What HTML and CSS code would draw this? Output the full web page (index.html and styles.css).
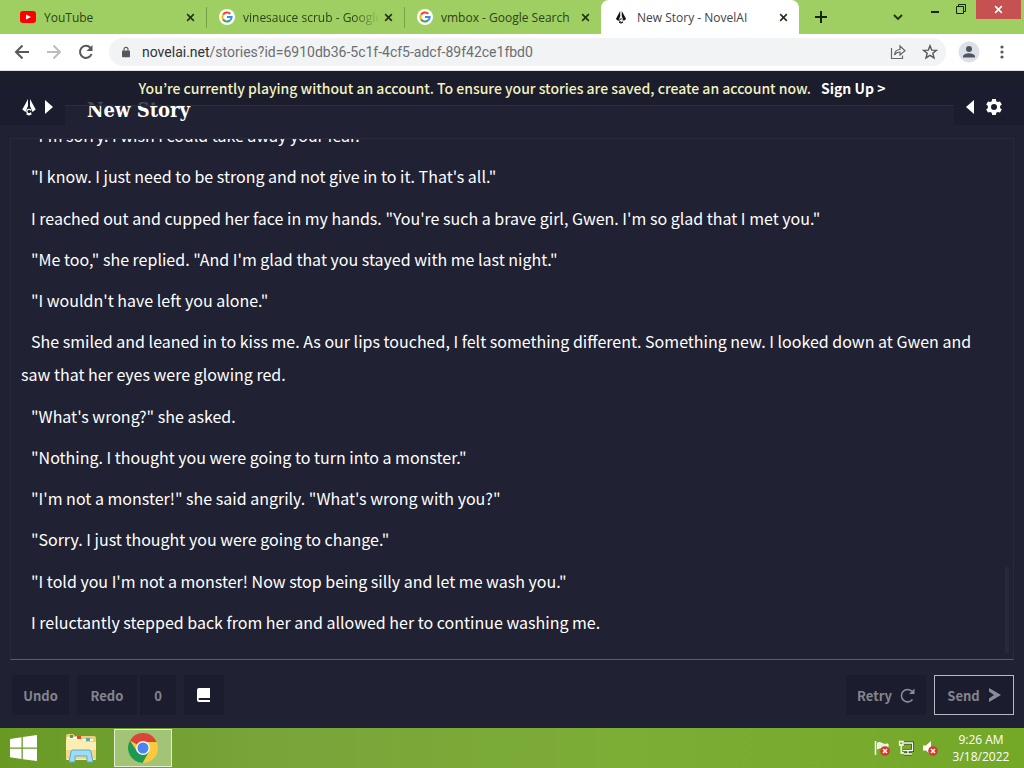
FILE: index.html
```html
<!DOCTYPE html>
<html lang="en">
<head>
    <meta charset="UTF-8">
    <meta name="viewport" content="width=device-width, initial-scale=1.0">
    <title>New Story - NovelAI</title>
    <link rel="stylesheet" href="styles.css">
</head>
<body>
    <svg class="defs" width="0" height="0" aria-hidden="true">
        <symbol id="google" viewBox="0 0 16 16">
            <circle cx="8" cy="8" r="8" fill="#fff"/>
            <g fill="none" stroke-width="2">
                <path d="M4.1 5.6A4.6 4.6 0 0 1 11.3 4.8" stroke="#ea4335"/>
                <path d="M4.1 10.4A4.6 4.6 0 0 1 4.1 5.6" stroke="#fbbc05"/>
                <path d="M11.2 11.3A4.6 4.6 0 0 1 4.1 10.4" stroke="#34a853"/>
                <path d="M8 8H12.6A4.6 4.6 0 0 1 11.2 11.3" stroke="#4285f4"/>
            </g>
        </symbol>
        <symbol id="close" viewBox="0 0 10 10">
            <path d="M1.3 1.3L8.7 8.7M8.7 1.3L1.3 8.7" fill="none" stroke="currentColor" stroke-width="1.8"/>
        </symbol>
        <symbol id="nib" viewBox="0 0 14 17">
            <path d="M6 0V7L3.5 13L.3 10.500L3.300 5ZM8 0V7L10.500 13L13.700 10.500L10.700 5Z" fill="currentColor"/>
            <path d="M4.500 14.800Q7 16.800 9.500 14.800M9 11.500A2.200 2.200 0 1 0 9 13.500" fill="none" stroke="currentColor" stroke-width="1.300"/>
        </symbol>
    </svg>

    <div class="tabs">
        <div class="tab">
            <svg class="favicon" viewBox="0 0 16 16"><rect y="2" width="16" height="12" rx="3" fill="#f00"/><path d="M6 5.4L11 8L6 10.6Z" fill="#fff"/></svg>
            <span class="tab-name">YouTube</span>
            <button class="tab-close" aria-label="Close tab"><svg><use href="#close"/></svg></button>
        </div>
        <div class="tab">
            <svg class="favicon"><use href="#google"/></svg>
            <span class="tab-name fade">vinesauce scrub - Google</span>
            <button class="tab-close" aria-label="Close tab"><svg><use href="#close"/></svg></button>
        </div>
        <div class="tab">
            <svg class="favicon"><use href="#google"/></svg>
            <span class="tab-name">vmbox - Google Search</span>
            <button class="tab-close" aria-label="Close tab"><svg><use href="#close"/></svg></button>
        </div>
        <div class="tab active">
            <svg class="favicon nib-small"><use href="#nib"/></svg>
            <span class="tab-name">New Story - NovelAI</span>
            <button class="tab-close" aria-label="Close tab"><svg><use href="#close"/></svg></button>
        </div>
        <button class="new-tab" aria-label="New tab"><svg width="12" height="12" viewBox="0 0 12 12"><path d="M6 0V12M0 6H12" stroke="#17250a" stroke-width="2"/></svg></button>
        <div class="window-buttons">
            <button class="chevron" aria-label="Search tabs"><svg width="10" height="7" viewBox="0 0 10 7"><path d="M1 1L5 5L9 1" fill="none" stroke="#1f3010" stroke-width="1.8"/></svg></button>
            <button class="minimize" aria-label="Minimize"><svg width="8" height="10" viewBox="0 0 8 10"><path d="M0 8H8" stroke="#17250a" stroke-width="2"/></svg></button>
            <button class="restore" aria-label="Restore"><svg width="10" height="10" viewBox="0 0 10 10"><path d="M.5 2.5H7.5V9.5H.5ZM2.5 2.5V.5H9.5V7.5H7.5" fill="none" stroke="#17250a"/></svg></button>
            <button class="exit" aria-label="Close"><svg width="9" height="9" viewBox="0 0 10 10"><use href="#close"/></svg></button>
        </div>
    </div>

    <div class="toolbar">
        <button aria-label="Back"><svg width="16" height="16" viewBox="0 0 16 16"><path d="M15 8H2M8.5 1.5L2 8L8.5 14.5" fill="none" stroke="#55585c" stroke-width="2"/></svg></button>
        <button aria-label="Forward"><svg width="16" height="16" viewBox="0 0 16 16"><path d="M1 8H14M7.5 1.5L14 8L7.5 14.5" fill="none" stroke="#bbbdc0" stroke-width="2"/></svg></button>
        <button aria-label="Reload"><svg width="16" height="16" viewBox="0 0 16 16"><path d="M13.6 10A6 6 0 1 1 12.4 3.8" fill="none" stroke="#55585c" stroke-width="2"/><path d="M14.5 1V7H8.5Z" fill="#55585c"/></svg></button>
        <div class="address">
            <svg width="8" height="12" viewBox="0 0 10 13"><rect y="4.5" width="10" height="8.5" rx="1" fill="#54575b"/><path d="M2.5 5V3.2a2.5 2.5 0 0 1 5 0V5" fill="none" stroke="#54575b" stroke-width="1.4"/></svg>
            <span class="url"><b>novelai.net</b>/stories?id=6910db36-5c1f-4cf5-adcf-89f42ce1fbd0</span>
            <button aria-label="Share"><svg width="16" height="16" viewBox="0 0 16 16"><path d="M1.5 4V14.5H12.5V11.5M4.5 11Q5 5.5 10 5.5V2L15 6.8L10 11V8Q6.500 8 4.5 11Z" fill="none" stroke="#63666a" stroke-width="1.2"/></svg></button>
            <button aria-label="Bookmark"><svg width="16" height="16" viewBox="0 0 16 16"><path d="M8 1.800L9.700 6.100L14.400 6.400L10.800 9.300L12 13.900L8 11.400L4 13.900L5.200 9.300L1.600 6.400L6.300 6.100Z" fill="none" stroke="#55585c" stroke-width="1.4"/></svg></button>
        </div>
        <button class="profile" aria-label="Profile"><svg width="22" height="22" viewBox="0 0 22 22"><circle cx="11" cy="11" r="10.500" fill="#dce0e8"/><circle cx="11" cy="8" r="3" fill="#50565f"/><path d="M5 16.500V14.800Q6.500 12.300 11 12.300T17 14.800V16.500Z" fill="#50565f"/></svg></button>
        <button aria-label="Menu"><svg width="4" height="14" viewBox="0 0 4 14" fill="#55585c"><circle cx="2" cy="2" r="1.600"/><circle cx="2" cy="7" r="1.600"/><circle cx="2" cy="12" r="1.600"/></svg></button>
    </div>

    <main class="app">
        <div class="banner">
            <span>You’re currently playing without an account. To ensure your stories are saved, create an account now.</span>
            <a href="#signup">Sign Up &gt;</a>
        </div>
        <header class="app-header">
            <button class="corner left" aria-label="Open library">
                <svg width="14" height="17"><use href="#nib"/></svg>
                <svg width="8" height="14" viewBox="0 0 8 14"><path d="M0 0L8 7L0 14Z" fill="#fff"/></svg>
            </button>
            <h1>New Story</h1>
            <button class="corner right" aria-label="Open settings">
                <svg width="8" height="14" viewBox="0 0 8 14"><path d="M8 0L0 7L8 14Z" fill="#fff"/></svg>
                <svg width="16" height="16" viewBox="0 0 16 16"><path fill="#fff" fill-rule="evenodd" d="M6.200 0H9.800L10.300 2.300L11.800 3.100L14 2.400L15.800 5.500L14.100 7.100V8.900L15.800 10.500L14 13.600L11.800 12.900L10.300 13.700L9.800 16H6.200L5.700 13.700L4.200 12.900L2 13.600L.2 10.500L1.900 8.900V7.100L.2 5.500L2 2.400L4.200 3.100L5.700 2.300ZM8 5a3 3 0 1 0 0 6a3 3 0 1 0 0-6Z"/></svg>
            </button>
        </header>

        <div class="editor">
            <article class="story">
                <p class="first">"I'm sorry. I wish I could take away your fear."</p>
                <p>"I know. I just need to be strong and not give in to it. That's all."</p>
                <p>I reached out and cupped her face in my hands. "You're such a brave girl, Gwen. I'm so glad that I met you."</p>
                <p>"Me too," she replied. "And I'm glad that you stayed with me last night."</p>
                <p>"I wouldn't have left you alone."</p>
                <p>She smiled and leaned in to kiss me. As our lips touched, I felt something different. Something new. I looked down at Gwen and saw that her eyes were glowing red.</p>
                <p>"What's wrong?" she asked.</p>
                <p>"Nothing. I thought you were going to turn into a monster."</p>
                <p>"I'm not a monster!" she said angrily. "What's wrong with you?"</p>
                <p>"Sorry. I just thought you were going to change."</p>
                <p>"I told you I'm not a monster! Now stop being silly and let me wash you."</p>
                <p>I reluctantly stepped back from her and allowed her to continue washing me.</p>
            </article>
            <div class="scroll-thumb"></div>
        </div>

        <div class="controls">
            <button class="undo">Undo</button>
            <div class="redo-group">
                <button class="redo">Redo</button>
                <button class="count">0</button>
            </div>
            <button class="book" aria-label="Lorebook"><svg width="14" height="14" viewBox="0 0 14 14"><path d="M2 0H13V10H2.500Q1.500 10 1.500 11T2.500 12H13V14H2Q0 14 0 12V2Q0 0 2 0Z" fill="#fff"/></svg></button>
            <button class="retry">Retry <svg width="15" height="15" viewBox="0 0 15 15"><path d="M12.500 11.500A6.200 6.200 0 1 1 12 3.300" fill="none" stroke="#8c8c99" stroke-width="1.600"/><path d="M14.500 .5V6H9Z" fill="#8c8c99"/></svg></button>
            <button class="send">Send <svg width="12" height="14" viewBox="0 0 12 14"><path d="M0 0L12 7L0 14V10.500L5 7L0 3.500Z" fill="#8c8c99"/></svg></button>
        </div>
    </main>

    <footer class="taskbar">
        <button class="start" aria-label="Start"><svg width="28" height="26" viewBox="0 0 28 26" fill="#fff"><path d="M0 4L11.500 2.200V12.500H0ZM12.800 2L27 0V12.500H12.800ZM0 13.800H11.500V24L0 22.200ZM12.800 13.800H27V26L12.800 24.200Z"/></svg></button>
        <button class="explorer" aria-label="File Explorer">
            <svg width="34" height="30" viewBox="0 0 34 30">
                <path d="M2 3Q2 1 4 1H9L11 3H30Q32 3 32 5V26H2Z" fill="#e9cf77"/>
                <path d="M3 6V4H15V6ZM17 8V6H29V8Z" fill="#fffdf0"/>
                <path d="M13 3h4v3h-4z" fill="#d44b3c"/><path d="M6 2h3v3H6z" fill="#4e9a55"/><path d="M22 5h4v3h-4z" fill="#55a5bd"/>
                <path d="M3 6H19L21 9H32V26Q32 27 31 27H3Q2 27 2 26V7Z" fill="#fbeeb0"/>
                <path d="M2 17H32V26H2Z" fill="#f0d98a"/>
                <path d="M5 29L7 19Q7 17 9 17H25Q27 17 27 19L29 29H23V23H11V29Z" fill="#9ddcf5" stroke="#5aa9ce"/>
            </svg>
        </button>
        <button class="chrome" aria-label="Google Chrome">
            <svg width="30" height="30" viewBox="0 0 30 30">
                <circle cx="15" cy="15" r="15" fill="#fbc93d"/>
                <path d="M15 15L2 7.500A15 15 0 0 1 28 7.500L28.500 9H15Z" fill="#db4437"/>
                <path d="M2 7.500A15 15 0 0 0 14.500 30L21 18.500L15 15L9 18.500Z" fill="#1a9a55"/>
                <circle cx="15" cy="15" r="7" fill="#f4f6f8"/><circle cx="15" cy="15" r="5.500" fill="#4a86ee"/>
            </svg>
        </button>
        <div class="tray">
            <svg width="16" height="16" viewBox="0 0 16 16"><path d="M1.500 1V15" stroke="#fff" stroke-width="1.500"/><path d="M3.500 3Q6 2 8 3.500T14 4V8Q10 9 8 8T3.500 9Z" fill="#e8f0da" stroke="#fff"/><circle cx="11" cy="11" r="4.800" fill="#d53a2d"/><path d="M9 9L13 13M13 9L9 13" stroke="#fff" stroke-width="1.500"/></svg>
            <svg width="16" height="16" viewBox="0 0 16 16"><g fill="none" stroke="#2f4d10" stroke-width="3"><path d="M6 3H14.500V10.500H5M10 11V13.500M6 14H14"/></g><g fill="none" stroke="#fff" stroke-width="1.300"><path d="M6 3H14.500V10.500H5M10 11V13.500M6 14H14M1.500 1.500H5V5H1.500ZM3.200 5V13H6"/></g></svg>
            <svg width="16" height="16" viewBox="0 0 16 16"><path d="M1 5.500H4L9 1V15L4 10.500H1Z" fill="#fff"/><circle cx="11" cy="11" r="4.800" fill="#d53a2d"/><path d="M9 9L13 13M13 9L9 13" stroke="#fff" stroke-width="1.500"/></svg>
        </div>
        <div class="clock">
            <span>9:26 AM</span>
            <span>3/18/2022</span>
        </div>
    </footer>
</body>
</html>
```
FILE: styles.css
```css
*
{
    box-sizing: border-box;
}
body
{
    display: flex;
    flex-direction: column;
    height: 100vh;
    margin: 0;
    overflow: hidden;
    font-family: 'Open Sans', 'Noto Sans', sans-serif;
    font-size: 12px;
}
button
{
    display: flex;
    align-items: center;
    justify-content: center;
    padding: 0;
    border: 0;
    background: none;
    color: inherit;
    font: inherit;
}
svg
{
    flex-shrink: 0;
}
.defs
{
    position: absolute;
}

/* browser tabs */
.tabs
{
    display: flex;
    height: 34px;
    flex-shrink: 0;
    background: #9fce62;
    color: #2d4318;
}
.tab
{
    display: flex;
    align-items: center;
    flex: 0 1 198px;
    min-width: 0;
    gap: 8px;
    padding: 0 10px 0 12px;
}
.tab:first-child
{
    flex-basis: 206px;
    padding-left: 20px;
}
.tab:nth-child(2), .tab:nth-child(3)
{
    border-left: 1px solid;
    border-image: linear-gradient(transparent 8px, #78a044 8px, #78a044 27px, transparent 27px) 1;
}
.tab:nth-child(3)
{
    flex-basis: 197px;
}
.tab.active
{
    background: #fff;
    border-radius: 8px 8px 0 0;
    color: #414347;
}
.favicon
{
    width: 16px;
    height: 16px;
}
.nib-small
{
    color: #111;
    height: 13px;
}
.tab-name
{
    flex: 1;
    overflow: hidden;
    margin-right: -6px;
    white-space: nowrap;
}
.fade
{
    mask-image: linear-gradient(to right, #000 80%, transparent);
}
.tab-close
{
    width: 12px;
    height: 12px;
    color: #24321a;
}
.tab-close svg
{
    width: 9px;
    height: 9px;
}
.new-tab
{
    width: 44px;
}
.window-buttons
{
    display: flex;
    align-items: flex-start;
    margin-left: auto;
    padding-right: 3px;
}
.chevron
{
    width: 28px;
    height: 34px;
    margin-right: 10px;
}
.minimize
{
    width: 26px;
    height: 18px;
}
.restore
{
    width: 26px;
    height: 18px;
    margin-right: 2px;
}
.exit
{
    width: 45px;
    height: 19px;
    background: #c75050;
    color: #fff;
}

/* address row */
.toolbar
{
    display: flex;
    align-items: center;
    gap: 16px;
    height: 37px;
    flex-shrink: 0;
    padding: 0 20px 0 14px;
    background: #fff;
    border-bottom: 1px solid #dde3e0;
}
.toolbar .profile
{
    margin-right: 4px;
}
.address
{
    display: flex;
    align-items: center;
    flex: 1;
    gap: 16px;
    height: 28px;
    margin: 0 -4px 0 -1px;
    padding: 0 8px 0 13px;
    border-radius: 14px;
    background: #f1f3f4;
}
.url
{
    flex: 1;
    margin-left: -4px;
    color: #6b6e73;
    font-family: Roboto, sans-serif;
    font-size: 14px;
    white-space: nowrap;
}
.url b
{
    color: #303236;
    font-weight: 400;
}

/* story page */
.app
{
    display: flex;
    flex-direction: column;
    flex: 1;
    min-height: 0;
    background: #202133;
    color: #fff;
    font-family: 'Noto Sans CJK JP', sans-serif;
}
.banner
{
    display: flex;
    align-items: center;
    justify-content: center;
    gap: 10px;
    height: 35px;
    z-index: 1;
    flex-shrink: 0;
    border-bottom: 1px solid #2c2d40;
    background: rgba(26, 27, 43, 0.8);
    color: #f3f3c0;
    font-size: 14px;
    font-weight: 500;
    white-space: nowrap;
}
.banner a
{
    color: #fff;
    font-weight: 700;
    text-decoration: none;
}
.app-header
{
    display: flex;
    align-items: flex-start;
    height: 49px;
    flex-shrink: 0;
    margin-top: -17px;
}
.app-header h1
{
    flex: 1;
    margin: 7px 0 0 22px;
    font-family: 'DejaVu Serif Condensed', 'DejaVu Serif', serif;
    font-size: 20px;
    line-height: 28px;
}
.corner
{
    gap: 9px;
    height: 36px;
    z-index: 2;
    background: #1b1c2d;
}
.corner.left
{
    width: 65px;
    padding-left: 10px;
}
.corner.right
{
    width: 70px;
    gap: 12px;
    padding-right: 10px;
}
.editor
{
    display: flex;
    flex: 1;
    min-height: 0;
    margin: 0 10px;
    border: 1px solid #292a3d;
    border-bottom-color: #5b5c69;
}
.story
{
    display: flex;
    flex-direction: column;
    justify-content: space-between;
    flex: 1;
    overflow: hidden;
    padding: 0 10px 20px;
    font-size: 16px;
    line-height: 33px;
}
.story p
{
    margin: 0;
    text-indent: 10px;
}
.story .first
{
    margin-top: -20px;
}
.scroll-thumb
{
    align-self: flex-end;
    width: 4px;
    height: 86px;
    margin: 0 4px 6px 0;
    background: #272839;
}
.controls
{
    display: flex;
    align-items: center;
    gap: 8px;
    height: 68px;
    flex-shrink: 0;
    padding: 2px 10px 0 12px;
    color: #85858f;
    font-size: 13px;
    font-weight: 700;
}
.controls button
{
    height: 40px;
    background: #1b1c2d;
}
.redo-group
{
    display: flex;
    gap: 3px;
}
.undo
{
    width: 57px;
}
.redo
{
    width: 60px;
}
.count
{
    width: 36px;
}
.book
{
    width: 40px;
}
.controls .retry
{
    gap: 8px;
    width: 80px;
    margin-left: auto;
}
.controls .send
{
    gap: 9px;
    width: 80px;
    border: 1px solid #b9b9c2;
}

/* desktop taskbar */
.taskbar
{
    display: flex;
    align-items: center;
    height: 40px;
    flex-shrink: 0;
    background: linear-gradient(to right, #689a23, #78a43a 25%, #7cad36 60%, #74a827);
    color: #fff;
}
.start
{
    width: 48px;
}
.explorer
{
    width: 66px;
}
.chrome
{
    width: 58px;
    height: 38px;
    border: 1px solid #e2edcf;
    background: #a3c377;
}
.tray
{
    display: flex;
    gap: 8px;
    margin-left: auto;
}
.clock
{
    display: flex;
    flex-direction: column;
    align-items: center;
    width: 86px;
    line-height: 17px;
}
```
